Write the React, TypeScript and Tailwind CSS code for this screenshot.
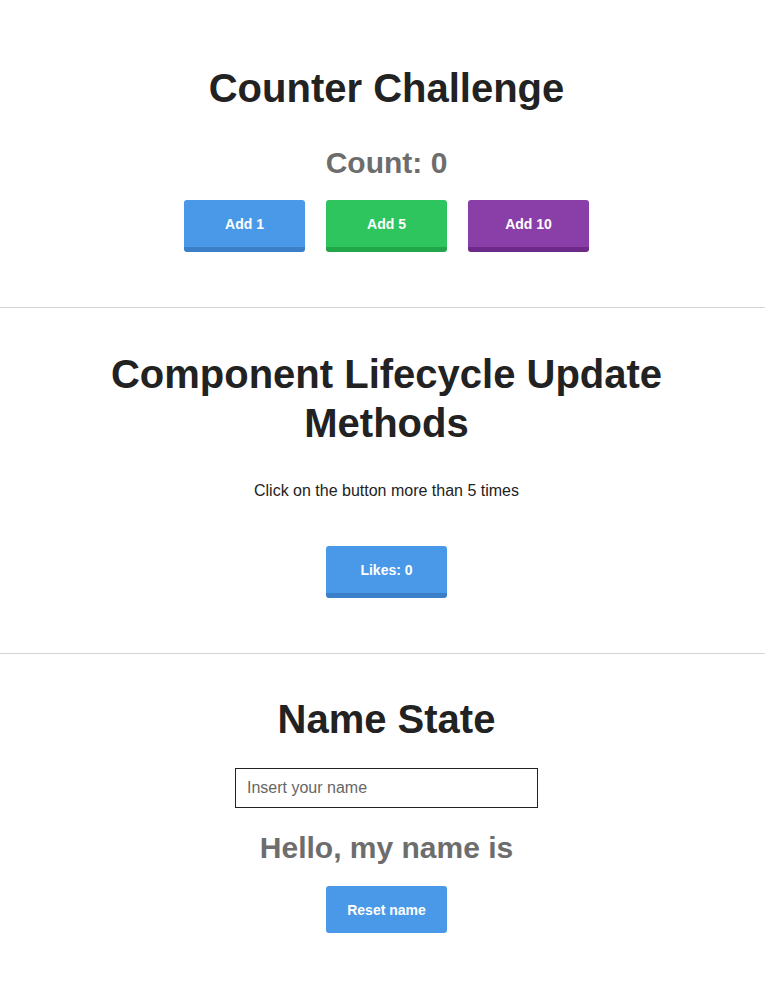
import { useState } from "react";

const font = { fontFamily: '"Liberation Sans", Arial, sans-serif' };

const Button = ({
  label,
  color,
  onClick,
}: {
  label: string;
  color: "blue" | "green" | "purple" | "flat";
  onClick?: () => void;
}) => {
  const colors = {
    blue: "bg-[#4a99e8] border-b-[5px] border-[#3a7fc7] h-[52px]",
    green: "bg-[#2ec55f] border-b-[5px] border-[#22a64a] h-[52px]",
    purple: "bg-[#8a3ea8] border-b-[5px] border-[#6d2a88] h-[52px]",
    flat: "bg-[#4a99e8] h-[47px]",
  };
  return (
    <button
      onClick={onClick}
      className={`w-[121px] rounded-[3px] pt-px text-[14px] font-bold text-white ${colors[color]}`}
    >
      {label}
    </button>
  );
};

export default function App() {
  const [count, setCount] = useState(0);
  const [likes, setLikes] = useState(0);
  const [name, setName] = useState("");

  return (
    <div style={font} className="min-h-[988px] bg-white text-[#222]">
      {/* Counter */}
      <section className="flex flex-col items-center pl-2 pt-[64px] pb-[55px]">
        <h1 className="text-[40px] leading-[48px] font-bold">Counter Challenge</h1>
        <h2 className="mt-[33px] text-[30px] leading-[36px] font-bold text-[#6d6d6d]">Count: {count}</h2>
        <div className="mt-[19px] flex gap-[21px]">
          <Button label="Add 1" color="blue" onClick={() => setCount(count + 1)} />
          <Button label="Add 5" color="green" onClick={() => setCount(count + 5)} />
          <Button label="Add 10" color="purple" onClick={() => setCount(count + 10)} />
        </div>
      </section>

      <hr className="border-t border-[#d4d4d4]" />

      {/* Lifecycle */}
      <section className="flex flex-col items-center pl-2 pt-[42px] pb-[55px]">
        <h1 className="max-w-[600px] text-center text-[40px] leading-[49px] font-bold">
          Component Lifecycle Update Methods
        </h1>
        <p className="mt-[31px] text-[16px] leading-[24px]">Click on the button more than 5 times</p>
        <div className="mt-[43px]">
          <Button label={`Likes: ${likes}`} color="blue" onClick={() => setLikes(likes + 1)} />
        </div>
      </section>

      <hr className="border-t border-[#d4d4d4]" />

      {/* Name */}
      <section className="flex flex-col items-center pl-2 pt-[41px] pb-[55px]">
        <h1 className="text-[40px] leading-[48px] font-bold">Name State</h1>
        <input
          value={name}
          onChange={(e) => setName(e.target.value)}
          placeholder="Insert your name"
          className="mt-[25px] h-[40px] w-[303px] border border-[#222] px-[11px] text-[16px] text-[#222] placeholder:text-[#666] outline-none"
        />
        <h2 className="mt-[22px] text-[30px] leading-[36px] font-bold text-[#6d6d6d]">
          Hello, my name is {name}
        </h2>
        <div className="mt-[20px]">
          <Button label="Reset name" color="flat" onClick={() => setName("")} />
        </div>
      </section>
    </div>
  );
}
